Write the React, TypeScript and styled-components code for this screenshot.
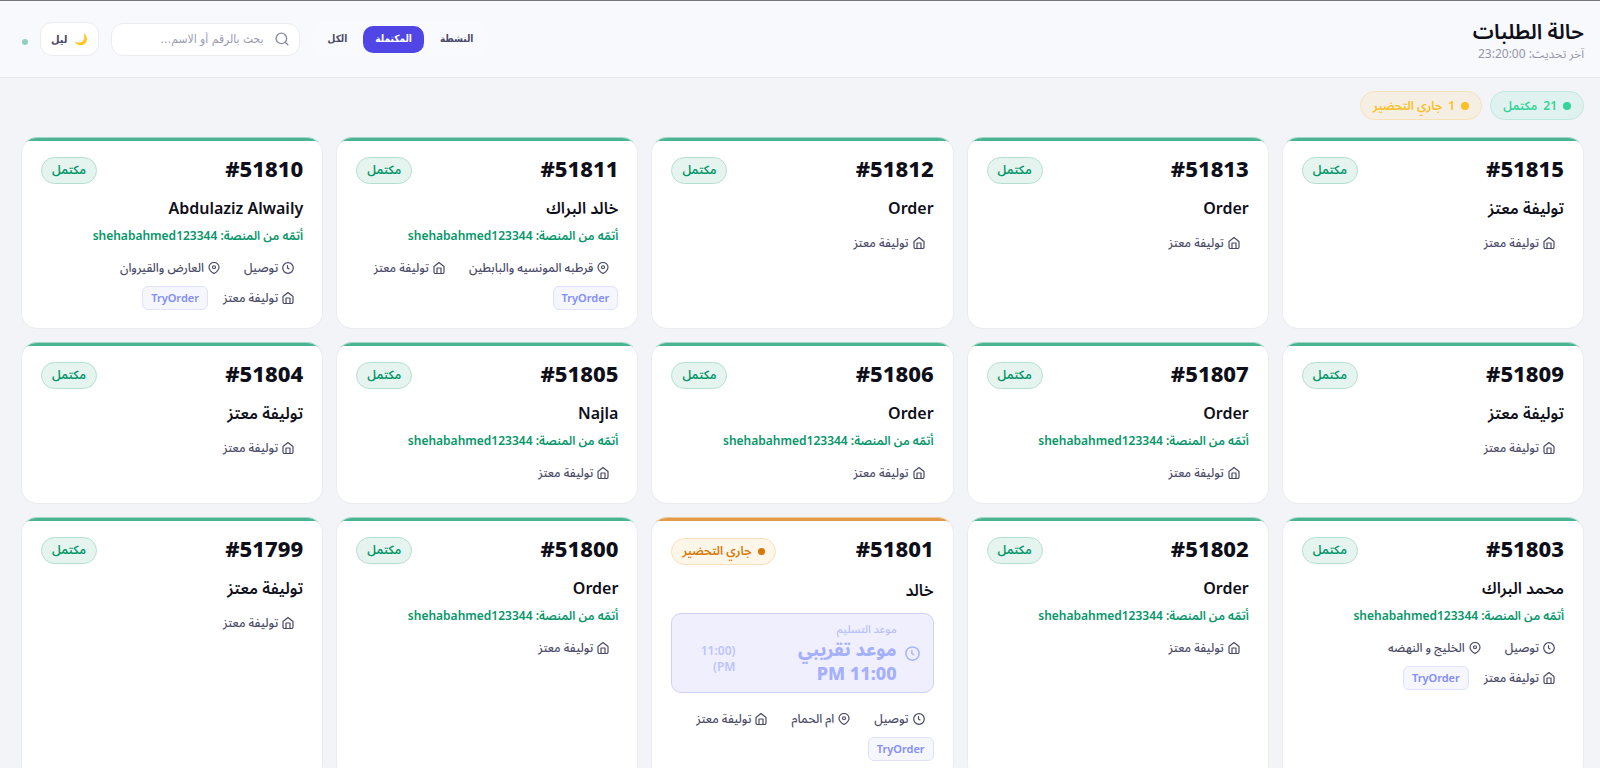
import React, { useState } from 'react';
import styled, { createGlobalStyle } from 'styled-components';

type Status = 'done' | 'preparing';
type Order = {
  id: number;
  name: string;
  status?: Status;
  completedBy?: string;
  delivery?: boolean;
  area?: string;
  eta?: string;
  source?: string;
};

const STORE = 'توليفة معتز';
const USER = 'shehabahmed123344';

const orders: Order[] = [
  { id: 51815, name: STORE },
  { id: 51813, name: 'Order' },
  { id: 51812, name: 'Order' },
  { id: 51811, name: 'خالد البراك', completedBy: USER, area: 'قرطبه المونسيه والبابطين', source: 'TryOrder' },
  { id: 51810, name: 'Abdulaziz Alwaily', completedBy: USER, delivery: true, area: 'العارض والقيروان', source: 'TryOrder' },
  { id: 51809, name: STORE },
  { id: 51807, name: 'Order', completedBy: USER },
  { id: 51806, name: 'Order', completedBy: USER },
  { id: 51805, name: 'Najla', completedBy: USER },
  { id: 51804, name: STORE },
  { id: 51803, name: 'محمد البراك', completedBy: USER, delivery: true, area: 'الخليج و النهضه', source: 'TryOrder' },
  { id: 51802, name: 'Order', completedBy: USER },
  { id: 51801, name: 'خالد', status: 'preparing', delivery: true, area: 'ام الحمام', eta: '11:00 PM', source: 'TryOrder' },
  { id: 51800, name: 'Order', completedBy: USER },
  { id: 51799, name: STORE },
];

const tabs = ['النشطة', 'المكتملة', 'الكل'];

const tones = {
  done: { stripe: '#4ab391', edge: '#a5d8c7', text: '#059669', fill: '#e6f4f0', line: '#b4dfd0' },
  preparing: { stripe: '#e39b48', edge: '#ecc79c', text: '#d97706', fill: '#fef6e9', line: '#f8dfbb' },
};

const GlobalStyle = createGlobalStyle`
  * { box-sizing: border-box; }
  html { scrollbar-width: none; }
  body {
    margin: 0;
    background: #f3f4f8;
    color: #0f0f1a;
    font-family: 'Noto Sans', 'Noto Sans Arabic', 'DejaVu Sans Condensed', sans-serif;
  }
  button, input { font-family: 'DejaVu Sans Condensed', 'DejaVu Sans', sans-serif; }
  h1, h2, p { margin: 0; }
`;

const Header = styled.header`
  display: flex;
  justify-content: space-between;
  align-items: center;
  height: 78px;
  padding: 0 16px 0 22px;
  background: #f8f9fd;
  border-top: 1px solid #77777d;
  border-bottom: 1px solid #e8eaf0;
`;

const Heading = styled.div`
  padding-top: 4px;
`;

const Title = styled.h1`
  font-size: 21px;
  line-height: 26px;
  font-weight: 600;
`;

const Updated = styled.p`
  font-size: 12px;
  line-height: 20px;
  color: #9494ab;
`;

const Controls = styled.div`
  display: flex;
  align-items: center;
  gap: 12px;
`;

const Tabs = styled.nav`
  display: flex;
  gap: 4px;
  padding: 3px;
  border: 1px solid #f9fafe;
  border-radius: 12px;
  background: #f9fafe;
`;

const Tab = styled.button<{ $active: boolean }>`
  height: 27px;
  padding: 0 12px;
  border: 0;
  border-radius: 10px;
  background: ${p => (p.$active ? '#4f46e5' : 'transparent')};
  color: ${p => (p.$active ? '#ffffff' : '#4a4a68')};
  font-size: 10px;
  line-height: 16px;
  font-weight: 700;
`;

const SearchBox = styled.label`
  display: flex;
  align-items: center;
  gap: 11px;
  width: 189px;
  height: 33px;
  padding: 0 10px;
  border: 1px solid #ececf1;
  border-radius: 12px;
  background: #ffffff;
  color: #8b8ba5;
`;

const SearchInput = styled.input`
  flex: 1;
  min-width: 0;
  padding: 0;
  border: 0;
  outline: 0;
  background: transparent;
  font-size: 12px;
  line-height: 20px;
  color: #4a4a68;
  &::placeholder { color: #9a9ab0; opacity: 1; }
`;

const ThemeButton = styled.button`
  display: flex;
  align-items: center;
  gap: 6px;
  height: 34px;
  padding: 0 10px;
  border: 1px solid #ececf1;
  border-radius: 12px;
  background: #ffffff;
  color: #4a4a68;
  font-size: 11px;
  font-weight: 700;
`;

const LiveStatus = styled.span`
  font-size: 16px;
  line-height: 24px;
`;

const LiveDot = styled.span`
  display: inline-block;
  width: 6px;
  height: 6px;
  border-radius: 50%;
  background: #8fd1bd;
`;

const Main = styled.main`
  padding: 13px 16px 13px 21px;
`;

const Summary = styled.div`
  display: flex;
  gap: 8px;
  margin-bottom: 17px;
`;

const Dot = styled.span<{ $size: number }>`
  width: ${p => p.$size}px;
  height: ${p => p.$size}px;
  border-radius: 50%;
  background: currentColor;
`;

const summaryTones = {
  done: { text: '#34d399', fill: '#e0f2ef', line: '#bfe9dc' },
  preparing: { text: '#fbbf24', fill: '#f5eee3', line: '#f6e2b6' },
};

const SummaryPill = styled.span<{ $status: Status }>`
  display: flex;
  align-items: center;
  gap: 6px;
  height: 29px;
  padding: 0 12px;
  border: 1px solid ${p => summaryTones[p.$status].line};
  border-radius: 15px;
  background: ${p => summaryTones[p.$status].fill};
  color: ${p => summaryTones[p.$status].text};
  font-size: 12px;
  line-height: 20px;
  font-weight: 600;
`;

const Grid = styled.section`
  display: grid;
  grid-template-columns: repeat(auto-fill, minmax(280px, 1fr));
  gap: 13px;
`;

const Card = styled.article<{ $status: Status }>`
  overflow: hidden;
  border: 1px solid #ebecf1;
  border-top-color: ${p => tones[p.$status].edge};
  border-radius: 16px;
  background: #ffffff;
`;

const Stripe = styled.div<{ $status: Status }>`
  height: 3px;
  background: ${p => tones[p.$status].stripe};
`;

const CardBody = styled.div`
  padding: 14px 19px 18px;
`;

const CardHead = styled.div<{ $status: Status }>`
  display: flex;
  justify-content: space-between;
  align-items: center;
  height: ${p => (p.$status === 'done' ? 30 : 32)}px;
  margin-bottom: 10px;
`;

const OrderNumber = styled.h2`
  align-self: flex-start;
  font-size: 22px;
  line-height: 26px;
  font-weight: 800;
`;

const Badge = styled.span<{ $status: Status }>`
  display: flex;
  align-items: center;
  gap: 6px;
  height: 27px;
  padding: 0 10px;
  border: 1px solid ${p => tones[p.$status].line};
  border-radius: 14px;
  background: ${p => tones[p.$status].fill};
  color: ${p => tones[p.$status].text};
  font-size: 12px;
  line-height: 20px;
  font-weight: 600;
`;

const Customer = styled.p`
  font-size: 16px;
  line-height: 26px;
  font-weight: 600;
`;

const CompletedBy = styled.p`
  margin-top: 6px;
  padding-bottom: 1px;
  font-size: 12px;
  line-height: 18px;
  font-weight: 600;
  color: #059669;
`;

const EtaBox = styled.div`
  display: flex;
  align-items: center;
  gap: 8px;
  height: 80px;
  margin: 10px 0 14px;
  padding: 0 13px;
  border: 1px solid #cfcffb;
  border-radius: 10px;
  background: #f0effe;
  color: #a5b4fc;
`;

const EtaText = styled.div`
  flex: 1;
`;

const EtaLabel = styled.div`
  font-size: 11px;
  line-height: 16px;
  font-weight: 500;
  color: #b9bffc;
`;

const EtaTime = styled.div`
  font-size: 18px;
  line-height: 24px;
  font-weight: 800;
  color: #a5b0fc;
`;

const EtaExact = styled.span`
  width: 50px;
  margin-inline-start: 8px;
  padding-top: 12px;
  font-size: 12px;
  line-height: 16px;
  font-weight: 600;
  color: #bcc4fd;
`;

const MetaList = styled.div`
  display: flex;
  flex-wrap: wrap;
  gap: 6px;
  margin-top: 10px;
`;

const MetaItem = styled.span`
  display: flex;
  align-items: center;
  gap: 4px;
  height: 24px;
  padding: 0 9px;
  color: #4a4a68;
  font-size: 12px;
  line-height: 20px;
  font-weight: 500;
`;

const SourceChip = styled.span`
  height: 24px;
  padding: 0 8px;
  border: 1px solid #e0e1fd;
  border-radius: 6px;
  background: #f6f6fe;
  color: #818cf8;
  font-size: 11px;
  line-height: 22px;
  font-weight: 600;
`;

const Icon = ({ size, children }: { size: number; children: React.ReactNode }) => (
  <svg width={size} height={size} viewBox="0 0 24 24" fill="none" stroke="currentColor"
    strokeWidth="2.4" strokeLinecap="round" strokeLinejoin="round" aria-hidden="true">
    {children}
  </svg>
);

const ClockIcon = ({ size = 12 }: { size?: number }) => (
  <Icon size={size}><circle cx="12" cy="12" r="10.6" /><path d="M11 7v5l3 2" /></Icon>
);
const PinIcon = () => (
  <Icon size={12}><path d="M22 10.5c0 7-10 12.5-10 12.5S2 17.500 2 10.500a10 9.500 0 0 1 20 0z" /><circle cx="12" cy="10.500" r="3" /></Icon>
);
const HomeIcon = () => (
  <Icon size={12}><path d="M2 9l10-8 10 8v11a3 3 0 0 1-3 3H5a3 3 0 0 1-3-3z" /><path d="M8 23V12h8v11" /></Icon>
);
const SearchIcon = () => (
  <Icon size={14}><circle cx="11" cy="11" r="9" /><path d="M22 22l-4.500-4.500" /></Icon>
);

function OrderCard({ order }: { order: Order }) {
  const status = order.status ?? 'done';
  return (
    <Card $status={status}>
      <Stripe $status={status} />
      <CardBody>
        <CardHead $status={status}>
          <OrderNumber>#{order.id}</OrderNumber>
          <Badge $status={status}>
            {status === 'preparing' ? <><Dot $size={7} />جاري التحضير</> : 'مكتمل'}
          </Badge>
        </CardHead>
        <Customer>{order.name}</Customer>
        {order.completedBy && <CompletedBy>أتمّه من المنصة: {order.completedBy}</CompletedBy>}
        {order.eta && (
          <EtaBox>
            <ClockIcon size={15} />
            <EtaText>
              <EtaLabel>موعد التسليم</EtaLabel>
              <EtaTime>موعد تقريبي {order.eta}</EtaTime>
            </EtaText>
            <EtaExact>({order.eta})</EtaExact>
          </EtaBox>
        )}
        <MetaList>
          {order.delivery && <MetaItem><ClockIcon />توصيل</MetaItem>}
          {order.area && <MetaItem><PinIcon />{order.area}</MetaItem>}
          <MetaItem><HomeIcon />{STORE}</MetaItem>
          {order.source && <SourceChip>{order.source}</SourceChip>}
        </MetaList>
      </CardBody>
    </Card>
  );
}

export default function App() {
  const [active, setActive] = useState(1);
  return (
    <div dir="rtl" lang="ar">
      <GlobalStyle />
      <Header>
        <Heading>
          <Title>حالة الطلبات</Title>
          <Updated>آخر تحديث: 23:20:00</Updated>
        </Heading>
        <Controls>
          <Tabs>
            {tabs.map((label, i) => (
              <Tab key={label} type="button" $active={i === active} onClick={() => setActive(i)}>{label}</Tab>
            ))}
          </Tabs>
          <SearchBox>
            <SearchIcon />
            <SearchInput type="text" aria-label="بحث" placeholder="بحث بالرقم أو الاسم…" />
          </SearchBox>
          <ThemeButton type="button"><span>🌙</span><span>ليل</span></ThemeButton>
          <LiveStatus><LiveDot /></LiveStatus>
        </Controls>
      </Header>
      <Main>
        <Summary>
          <SummaryPill $status="done"><Dot $size={8} /><span>21</span><span>مكتمل</span></SummaryPill>
          <SummaryPill $status="preparing"><Dot $size={8} /><span>1</span><span>جاري التحضير</span></SummaryPill>
        </Summary>
        <Grid>
          {orders.map(order => <OrderCard key={order.id} order={order} />)}
        </Grid>
      </Main>
    </div>
  );
}
